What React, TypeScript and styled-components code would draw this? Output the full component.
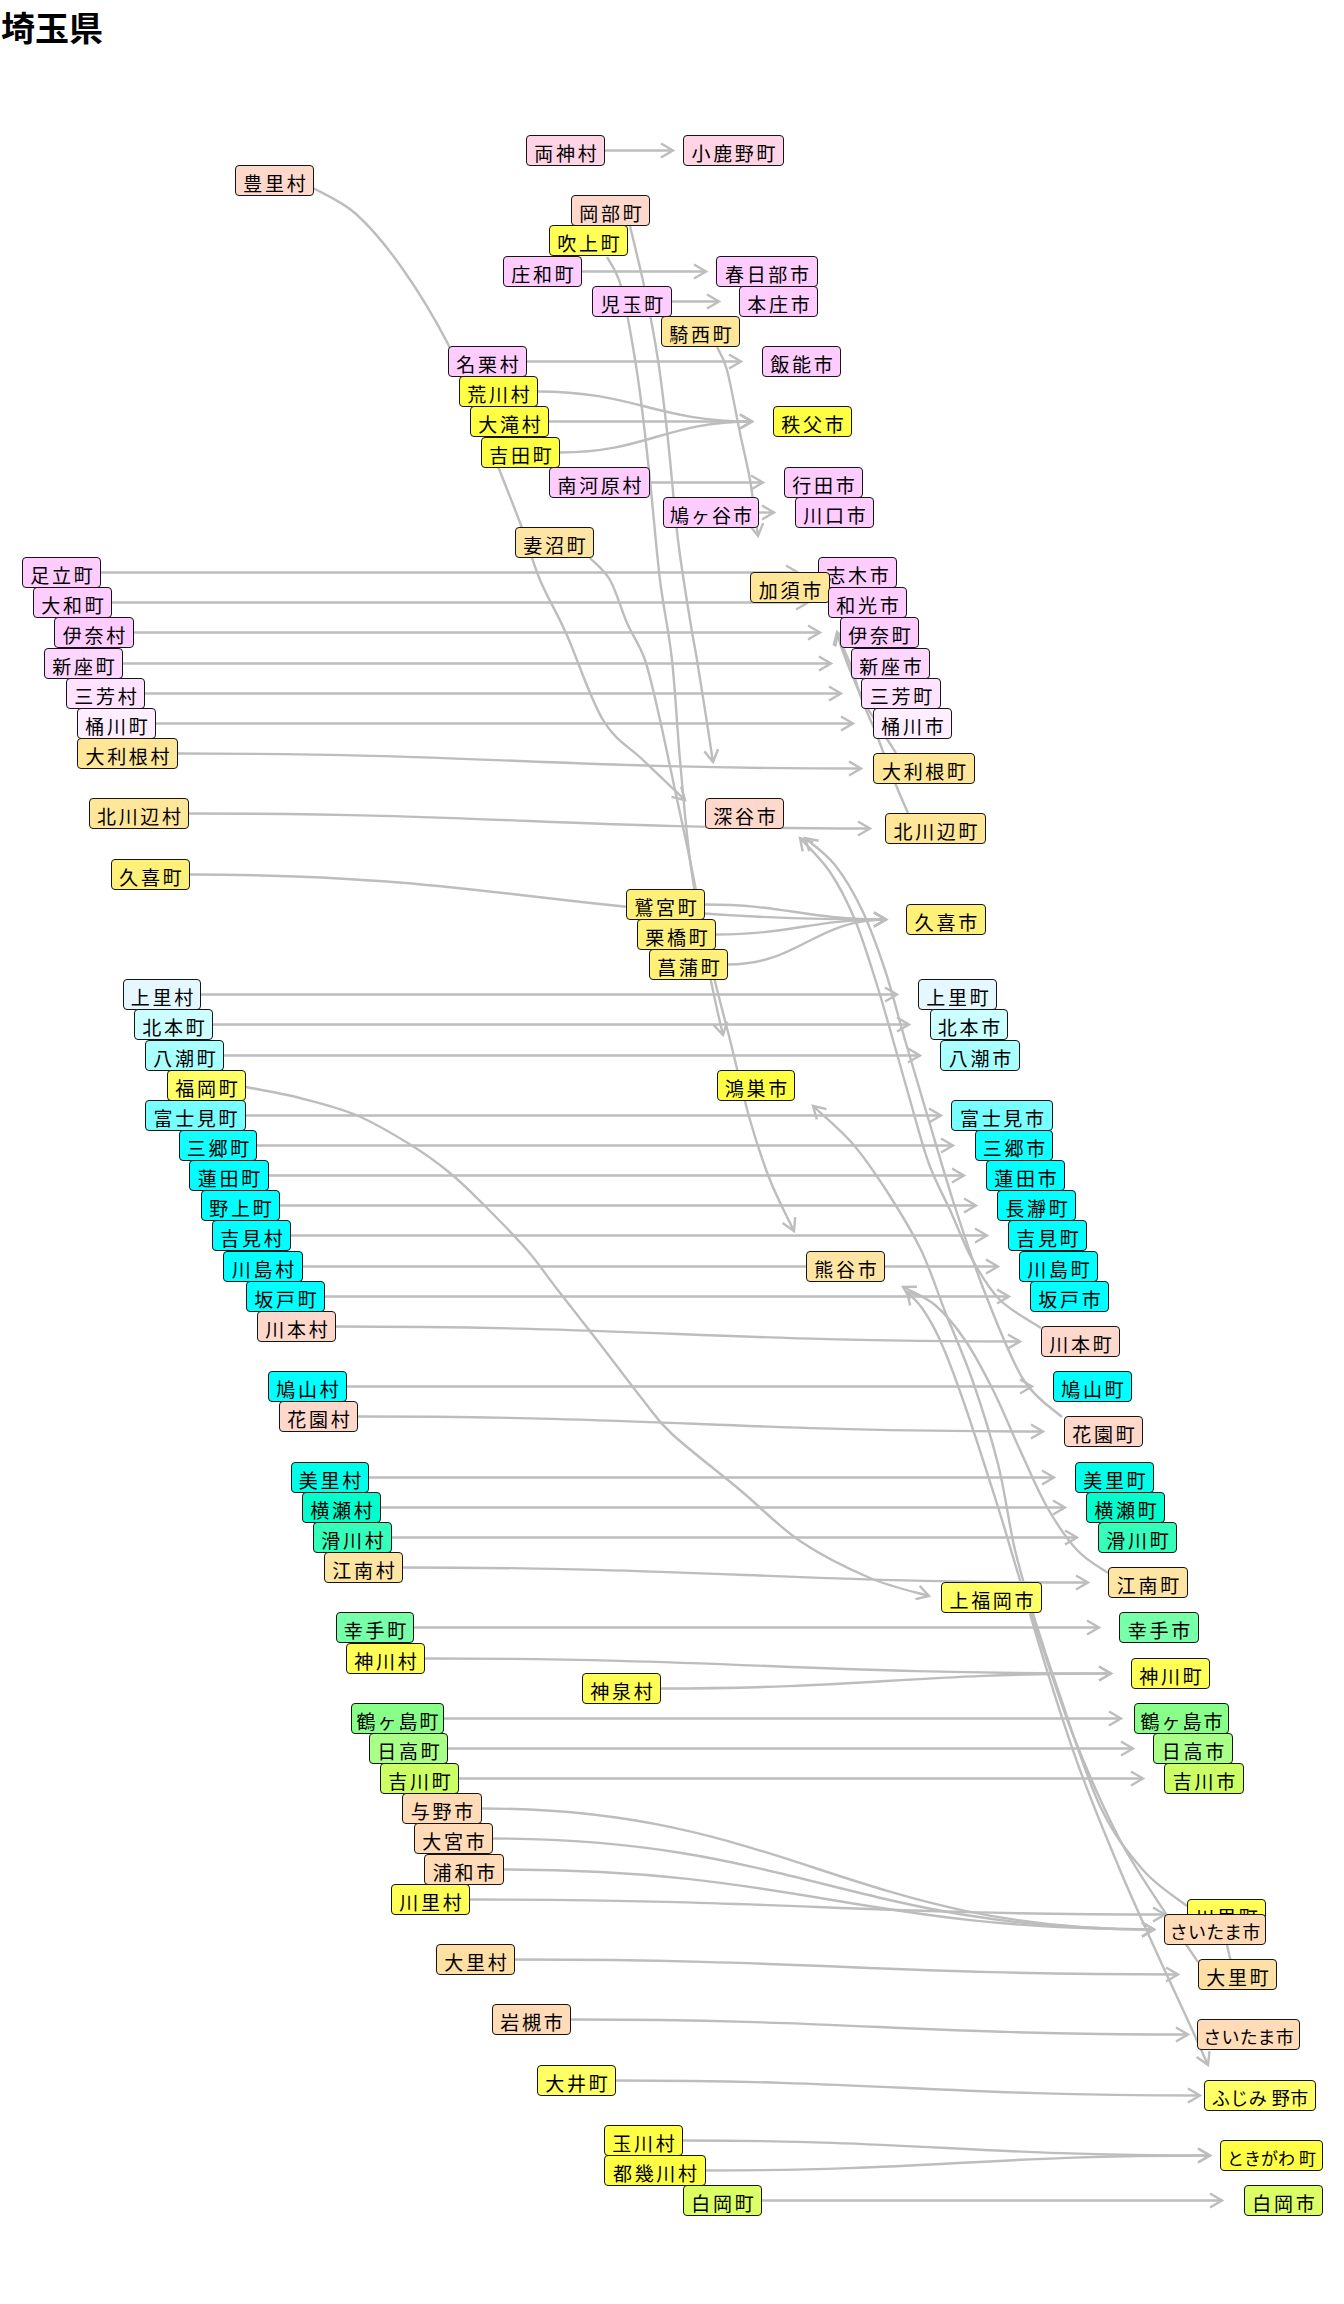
import React from "react";
import styled, { createGlobalStyle } from "styled-components";

const GlobalStyle = createGlobalStyle`
  html, body { margin: 0; padding: 0; background: #ffffff; }
  body { font-family: "Noto Sans CJK JP", "Noto Sans", sans-serif; color: #000; }
`;

const PAGE_W = 1344;
const PAGE_H = 2304;
const HEADER_H = 56;
const ROW0 = 135;
const PITCH = 30.15;
const NODE_H = 31;
const EDGE = "#bdbdbd";

const topOf = (r: number) => Math.round(ROW0 + PITCH * r);
const cyOf = (r: number) => topOf(r) + NODE_H / 2;

type NodeDef = {
  id: string;
  label: string;
  row: number;
  x: number;
  w: number;
  bg: string;
  ls: number;
  fs: number;
};

const PINK1 = "#ffd5e5";
const SALMON = "#ffd8cc";
const Y0 = "#ffff44";
const Y1 = "#ffff55";
const Y2 = "#ffff66";
const MAG = "#ffccff";
const MAG2 = "#ffd6ff";
const MAG3 = "#ffe2ff";
const MAG4 = "#ffeeff";
const ORG = "#ffe699";
const ORG2 = "#ffe5a3";
const ORG3 = "#ffe0a4";
const KUKI = "#fff07a";
const C0 = "#e5f8ff";
const C1 = "#ccffff";
const C2 = "#aaffff";
const C3 = "#77ffff";
const C4 = "#11ffff";
const C5 = "#00ffff";
const T1 = "#00ffe8";
const T2 = "#00ffcc";
const T3 = "#33ffbb";
const G1 = "#77ffaa";
const G2 = "#88ff88";
const G3 = "#aaff88";
const G4 = "#ccff66";
const G5 = "#ddff66";
const PEACH = "#ffdbb8";

const n = (
  label: string,
  row: number,
  x: number,
  w: number,
  bg: string,
  opts: { id?: string; ls?: number; fs?: number } = {}
): NodeDef => ({
  id: opts.id ?? label,
  label,
  row,
  x,
  w,
  bg,
  ls: opts.ls ?? 2.7,
  fs: opts.fs ?? 19,
});

const NODES: NodeDef[] = [
  n("両神村", 0, 526, 79, PINK1),
  n("小鹿野町", 0, 683, 101, PINK1),
  n("豊里村", 1, 235, 79, SALMON),
  n("岡部町", 2, 571, 79, SALMON),
  n("吹上町", 3, 549, 79, Y1),
  n("庄和町", 4, 503, 79, MAG),
  n("春日部市", 4, 716, 102, MAG),
  n("児玉町", 5, 592, 80, MAG),
  n("本庄市", 5, 739, 79, MAG),
  n("騎西町", 6, 661, 79, ORG),
  n("名栗村", 7, 448, 79, MAG),
  n("飯能市", 7, 762, 79, MAG),
  n("荒川村", 8, 459, 79, Y0),
  n("大滝村", 9, 470, 79, Y0),
  n("秩父市", 9, 773, 79, Y0),
  n("吉田町", 10, 481, 79, Y0),
  n("南河原村", 11, 549, 101, MAG),
  n("行田市", 11, 784, 79, MAG),
  n("鳩ヶ谷市", 12, 663, 96, MAG, { ls: 2 }),
  n("川口市", 12, 795, 79, MAG),
  n("妻沼町", 13, 515, 79, ORG2),
  n("足立町", 14, 22, 79, MAG),
  n("志木市", 14, 818, 79, MAG),
  n("加須市", 14.5, 750, 80, ORG),
  n("大和町", 15, 33, 79, MAG),
  n("和光市", 15, 828, 79, MAG),
  n("伊奈村", 16, 54, 80, MAG),
  n("伊奈町", 16, 840, 79, MAG),
  n("新座町", 17, 44, 79, MAG2),
  n("新座市", 17, 851, 79, MAG2),
  n("三芳村", 18, 66, 79, MAG3),
  n("三芳町", 18, 861, 80, MAG3),
  n("桶川町", 19, 77, 79, MAG4),
  n("桶川市", 19, 873, 79, MAG4),
  n("大利根村", 20, 77, 101, ORG),
  n("大利根町", 20.5, 873, 102, ORG),
  n("北川辺村", 22, 89, 100, ORG),
  n("深谷市", 22, 705, 79, SALMON),
  n("北川辺町", 22.5, 885, 101, ORG),
  n("久喜町", 24, 111, 79, KUKI),
  n("鷲宮町", 25, 626, 79, KUKI),
  n("久喜市", 25.5, 906, 80, KUKI),
  n("栗橋町", 26, 637, 79, KUKI),
  n("菖蒲町", 27, 649, 79, KUKI),
  n("上里村", 28, 123, 78, C0),
  n("上里町", 28, 918, 79, C0),
  n("北本町", 29, 134, 79, C1),
  n("北本市", 29, 930, 78, C1),
  n("八潮町", 30, 145, 79, C2),
  n("八潮市", 30, 940, 80, C2),
  n("福岡町", 31, 167, 79, Y2),
  n("鴻巣市", 31, 717, 78, Y0),
  n("富士見町", 32, 145, 101, C3),
  n("富士見市", 32, 951, 102, C3),
  n("三郷町", 33, 179, 78, C4),
  n("三郷市", 33, 975, 78, C4),
  n("蓮田町", 34, 189, 80, C5),
  n("蓮田市", 34, 986, 79, C5),
  n("野上町", 35, 201, 79, C5),
  n("長瀞町", 35, 997, 79, C5),
  n("吉見村", 36, 212, 79, C5),
  n("吉見町", 36, 1008, 79, C5),
  n("川島村", 37, 223, 80, C5),
  n("熊谷市", 37, 806, 79, ORG2),
  n("川島町", 37, 1019, 79, C5),
  n("坂戸町", 38, 246, 79, C5),
  n("坂戸市", 38, 1030, 79, C5),
  n("川本村", 39, 257, 79, SALMON),
  n("川本町", 39.5, 1041, 79, SALMON),
  n("鳩山村", 41, 268, 79, C5),
  n("鳩山町", 41, 1053, 79, C5),
  n("花園村", 42, 279, 79, SALMON),
  n("花園町", 42.5, 1064, 79, SALMON),
  n("美里村", 44, 291, 78, T1),
  n("美里町", 44, 1075, 79, T1),
  n("横瀬村", 45, 302, 79, T2),
  n("横瀬町", 45, 1086, 79, T2),
  n("滑川村", 46, 313, 79, T3),
  n("滑川町", 46, 1098, 79, T3),
  n("江南村", 47, 324, 79, ORG2),
  n("江南町", 47.5, 1108, 80, ORG2),
  n("上福岡市", 48, 941, 101, Y2),
  n("幸手町", 49, 336, 78, G1),
  n("幸手市", 49, 1119, 80, G1),
  n("神川村", 50, 346, 79, Y1),
  n("神川町", 50.5, 1131, 79, Y1),
  n("神泉村", 51, 582, 79, Y1),
  n("鶴ヶ島町", 52, 351, 93, G2, { ls: 2 }),
  n("鶴ヶ島市", 52, 1134, 95, G2, { ls: 2 }),
  n("日高町", 53, 369, 79, G3),
  n("日高市", 53, 1153, 80, G3),
  n("吉川町", 54, 380, 79, G4),
  n("吉川市", 54, 1164, 80, G4),
  n("与野市", 55, 402, 80, PEACH),
  n("大宮市", 56, 414, 79, PEACH),
  n("浦和市", 57, 424, 80, PEACH),
  n("川里村", 58, 391, 79, Y1),
  n("川里町", 58.5, 1187, 79, Y1),
  n("さいたま市", 59, 1164, 102, PEACH, { id: "saitamaA", ls: 0.3, fs: 18 }),
  n("大里村", 60, 436, 79, ORG3),
  n("大里町", 60.5, 1198, 79, ORG3),
  n("岩槻市", 62, 492, 79, PEACH),
  n("さいたま市", 62.5, 1197, 103, PEACH, { id: "saitamaB", ls: 0.3, fs: 18 }),
  n("大井町", 64, 537, 79, Y2),
  n("ふじみ 野市", 64.5, 1204, 112, Y2, { ls: 0.5, fs: 18 }),
  n("玉川村", 66, 604, 79, Y0),
  n("ときがわ 町", 66.5, 1220, 103, Y0, { ls: 0, fs: 17 }),
  n("都幾川村", 67, 604, 102, Y0),
  n("白岡町", 68, 683, 79, G5),
  n("白岡市", 68, 1244, 79, G5),
];

const byId: Record<string, NodeDef> = {};
NODES.forEach((d) => {
  byId[d.id] = d;
});

type Direct = [string, string, number];

const DIRECT: Direct[] = [
  ["両神村", "小鹿野町", 10],
  ["庄和町", "春日部市", 10],
  ["児玉町", "本庄市", 20],
  ["名栗村", "飯能市", 21],
  ["荒川村", "秩父市", 21],
  ["大滝村", "秩父市", 21],
  ["吉田町", "秩父市", 21],
  ["南河原村", "行田市", 21],
  ["鳩ヶ谷市", "川口市", 21],
  ["足立町", "志木市", 20],
  ["大和町", "和光市", 20],
  ["伊奈村", "伊奈町", 20],
  ["新座町", "新座市", 20],
  ["三芳村", "三芳町", 20],
  ["桶川町", "桶川市", 20],
  ["大利根村", "大利根町", 12],
  ["北川辺村", "北川辺町", 15],
  ["久喜町", "久喜市", 20],
  ["鷲宮町", "久喜市", 20],
  ["栗橋町", "久喜市", 20],
  ["菖蒲町", "久喜市", 20],
  ["上里村", "上里町", 21],
  ["北本町", "北本市", 21],
  ["八潮町", "八潮市", 20],
  ["富士見町", "富士見市", 10],
  ["三郷町", "三郷市", 22],
  ["蓮田町", "蓮田市", 22],
  ["野上町", "長瀞町", 21],
  ["吉見村", "吉見町", 21],
  ["川島村", "川島町", 21],
  ["坂戸町", "坂戸市", 21],
  ["川本村", "川本町", 21],
  ["鳩山村", "鳩山町", 21],
  ["花園村", "花園町", 21],
  ["美里村", "美里町", 21],
  ["横瀬村", "横瀬町", 21],
  ["滑川村", "滑川町", 21],
  ["江南村", "江南町", 20],
  ["幸手町", "幸手市", 20],
  ["神川村", "神川町", 20],
  ["神泉村", "神川町", 20],
  ["鶴ヶ島町", "鶴ヶ島市", 13],
  ["日高町", "日高市", 20],
  ["吉川町", "吉川市", 21],
  ["与野市", "saitamaA", 10],
  ["大宮市", "saitamaA", 10],
  ["浦和市", "saitamaA", 10],
  ["川里村", "川里町", 22],
  ["大里村", "大里町", 20],
  ["岩槻市", "saitamaB", 9],
  ["大井町", "ふじみ 野市", 4],
  ["玉川村", "ときがわ 町", 10],
  ["都幾川村", "ときがわ 町", 10],
  ["白岡町", "白岡市", 22],
];

type P = [number, number];

// Long routed edges, page coordinates of their way points.
const CURVES: { id: string; pts: P[] }[] = [
  {
    id: "豊里村-深谷市",
    pts: [[313, 188], [356, 214], [402, 268], [448, 344], [475, 410], [499, 469], [522, 528], [540, 580], [566, 633], [603, 720], [643, 760], [685, 800]],
  },
  {
    id: "岡部町-深谷市",
    pts: [[630, 226], [645, 290], [658, 360], [668, 440], [678, 540], [690, 620], [697, 660], [705, 710], [713, 762]],
  },
  {
    id: "吹上町-鴻巣市",
    pts: [[607, 257], [620, 283], [630, 330], [640, 393], [650, 480], [660, 580], [672, 660], [680, 760], [690, 860], [705, 950], [715, 1000], [723, 1035]],
  },
  {
    id: "騎西町-加須市",
    pts: [[717, 347], [727, 370], [740, 433], [750, 480], [758, 536]],
  },
  {
    id: "妻沼町-熊谷市",
    pts: [[590, 558], [610, 580], [627, 623], [645, 660], [660, 720], [675, 790], [690, 860], [710, 960], [730, 1040], [750, 1120], [770, 1180], [794, 1231]],
  },
  {
    id: "大利根町-加須市",
    pts: [[896, 753], [880, 728], [863, 700], [850, 670], [841, 646], [837, 632]],
  },
  {
    id: "北川辺町-加須市",
    pts: [[908, 813], [898, 790], [888, 765], [876, 733], [862, 700], [851, 666], [842, 645], [838, 633]],
  },
  {
    id: "川本町-深谷市",
    pts: [[1041, 1328], [1000, 1300], [972, 1259], [950, 1210], [929, 1164], [910, 1100], [893, 1040], [877, 985], [855, 920], [830, 872], [800, 838]],
  },
  {
    id: "花園町-深谷市",
    pts: [[1062, 1417], [1023, 1379], [985, 1293], [955, 1207], [929, 1121], [905, 1040], [885, 970], [862, 910], [835, 865], [805, 838]],
  },
  {
    id: "江南町-熊谷市",
    pts: [[1108, 1573], [1077, 1550], [1047, 1507], [1020, 1450], [993, 1390], [965, 1340], [935, 1305], [903, 1287]],
  },
  {
    id: "大里町-熊谷市",
    pts: [[1198, 1962], [1170, 1920], [1120, 1840], [1075, 1740], [1040, 1640], [1020, 1580], [998, 1507], [963, 1400], [940, 1340], [922, 1308], [907, 1292]],
  },
  {
    id: "川里町-鴻巣市",
    pts: [[1187, 1906], [1143, 1870], [1100, 1806], [1058, 1690], [1035, 1620], [1015, 1550], [998, 1464], [972, 1379], [946, 1314], [921, 1250], [886, 1190], [852, 1143], [813, 1106]],
  },
  {
    id: "福岡町-上福岡市",
    pts: [[246, 1087], [300, 1098], [356, 1115], [411, 1145], [450, 1173], [484, 1205], [527, 1250], [557, 1289], [600, 1344], [643, 1400], [672, 1434], [740, 1490], [800, 1541], [870, 1578], [929, 1596]],
  },
  {
    id: "上福岡市-ふじみ野市",
    pts: [[1030, 1614], [1050, 1680], [1080, 1770], [1120, 1870], [1160, 1960], [1190, 2025], [1208, 2065]],
  },
  {
    id: "さいたま市-さいたま市",
    pts: [[1227, 1945], [1232, 1965], [1240, 1985]],
  },
];

const fmt = (v: number) => Math.round(v * 10) / 10;

function smoothPath(pts: P[]): string {
  let d = `M ${fmt(pts[0][0])} ${fmt(pts[0][1])}`;
  for (let i = 0; i < pts.length - 1; i++) {
    const p0 = pts[i - 1] ?? pts[i];
    const p1 = pts[i];
    const p2 = pts[i + 1];
    const p3 = pts[i + 2] ?? p2;
    const c1x = p1[0] + (p2[0] - p0[0]) / 6;
    const c1y = p1[1] + (p2[1] - p0[1]) / 6;
    const c2x = p2[0] - (p3[0] - p1[0]) / 6;
    const c2y = p2[1] - (p3[1] - p1[1]) / 6;
    d += ` C ${fmt(c1x)} ${fmt(c1y)} ${fmt(c2x)} ${fmt(c2y)} ${fmt(p2[0])} ${fmt(p2[1])}`;
  }
  return d;
}

function arrowHead(tip: P, dir: P): string {
  const len = Math.hypot(dir[0], dir[1]) || 1;
  const dx = dir[0] / len;
  const dy = dir[1] / len;
  const nx = -dy;
  const ny = dx;
  const bx = tip[0] - 12 * dx;
  const by = tip[1] - 12 * dy;
  return `${fmt(bx + 7 * nx)},${fmt(by + 7 * ny)} ${fmt(tip[0])},${fmt(tip[1])} ${fmt(bx - 7 * nx)},${fmt(by - 7 * ny)}`;
}

type Drawn = { key: string; d: string; head: string };

function buildEdges(): Drawn[] {
  const out: Drawn[] = [];
  DIRECT.forEach(([a, b, gap]) => {
    const s = byId[a];
    const t = byId[b];
    const sx = s.x + s.w;
    const sy = cyOf(s.row);
    const tx = t.x - gap;
    const ty = cyOf(t.row);
    let d: string;
    if (Math.abs(ty - sy) < 0.5) {
      d = `M ${sx} ${sy} L ${tx} ${ty}`;
    } else {
      const k = (tx - sx) * 0.45;
      d = `M ${sx} ${fmt(sy)} C ${fmt(sx + k)} ${fmt(sy)} ${fmt(tx - k)} ${fmt(ty)} ${tx} ${fmt(ty)}`;
    }
    out.push({ key: `${a}-${b}`, d, head: arrowHead([tx, ty], [1, 0]) });
  });
  CURVES.forEach((c) => {
    const last = c.pts[c.pts.length - 1];
    const prev = c.pts[c.pts.length - 2];
    out.push({
      key: c.id,
      d: smoothPath(c.pts),
      head: arrowHead(last, [last[0] - prev[0], last[1] - prev[1]]),
    });
  });
  return out;
}

const EDGES = buildEdges();

const Page = styled.div`
  width: ${PAGE_W}px;
  height: ${PAGE_H}px;
  overflow: hidden;
  background: #ffffff;
  display: flex;
  flex-direction: column;
`;

const Header = styled.header`
  height: ${HEADER_H}px;
  flex: none;
  box-sizing: border-box;
  padding: 9px 0 0 1px;
`;

const Title = styled.h1`
  margin: 0;
  font-family: "Noto Sans CJK JP", "Noto Sans", sans-serif;
  font-size: 34px;
  line-height: 36px;
  font-weight: 700;
  color: #000;
`;

const Canvas = styled.div`
  position: relative;
  flex: none;
  width: ${PAGE_W}px;
  height: ${PAGE_H - HEADER_H}px;
`;

const EdgeLayer = styled.svg`
  position: absolute;
  left: 0;
  top: 0;
  overflow: visible;
`;

const EdgeLine = styled.path`
  fill: none;
  stroke: ${EDGE};
  stroke-width: 2.4;
`;

const EdgeHead = styled.polyline`
  fill: none;
  stroke: ${EDGE};
  stroke-width: 2.4;
  stroke-linejoin: miter;
`;

const NodeBox = styled.div<{ $bg: string; $ls: number; $fs: number }>`
  position: absolute;
  box-sizing: border-box;
  height: ${NODE_H}px;
  display: flex;
  align-items: center;
  justify-content: center;
  padding: 3px 0 0 ${(p) => p.$ls}px;
  background: ${(p) => p.$bg};
  border: 1px solid #151515;
  border-radius: 4px;
  font-family: "Noto Sans CJK JP", "Noto Sans", sans-serif;
  font-size: ${(p) => p.$fs}px;
  letter-spacing: ${(p) => p.$ls}px;
  line-height: 1;
  color: #000;
  white-space: nowrap;
`;

export default function App() {
  return (
    <>
      <GlobalStyle />
      <Page>
        <Header>
          <Title>埼玉県</Title>
        </Header>
        <Canvas>
          <EdgeLayer
            width={PAGE_W}
            height={PAGE_H - HEADER_H}
            viewBox={`0 ${HEADER_H} ${PAGE_W} ${PAGE_H - HEADER_H}`}
          >
            {EDGES.map((e) => (
              <g key={e.key}>
                <EdgeLine d={e.d} />
                <EdgeHead points={e.head} />
              </g>
            ))}
          </EdgeLayer>
          {NODES.map((d) => (
            <NodeBox
              key={d.id}
              $bg={d.bg}
              $ls={d.ls}
              $fs={d.fs}
              style={{ left: d.x, top: topOf(d.row) - HEADER_H, width: d.w }}
            >
              {d.label}
            </NodeBox>
          ))}
        </Canvas>
      </Page>
    </>
  );
}
